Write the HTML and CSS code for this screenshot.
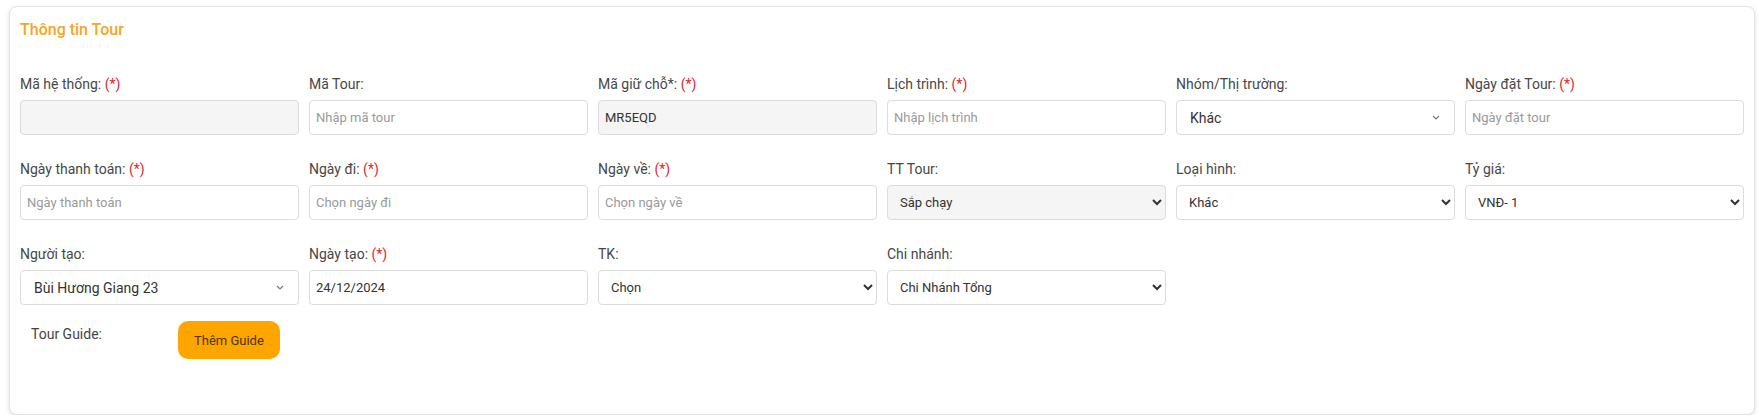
FILE: index.html
```html
<!DOCTYPE html>
<html lang="vi">
<head>
    <meta charset="UTF-8">
    <meta name="viewport" content="width=device-width, initial-scale=1.0">
    <title>Thông tin Tour</title>
    <link rel="stylesheet" href="styles.css">
</head>
<body>

    <div class="card">
        <h2 class="card-title">Thông tin Tour</h2>

        <div class="form-grid">
            <div class="field">
                <label>Mã hệ thống: <span class="req">(*)</span></label>
                <input type="text" class="input" disabled>
            </div>
            <div class="field">
                <label>Mã Tour:</label>
                <input type="text" class="input" placeholder="Nhập mã tour">
            </div>
            <div class="field">
                <label>Mã giữ chỗ*: <span class="req">(*)</span></label>
                <input type="text" class="input" value="MR5EQD" disabled>
            </div>
            <div class="field">
                <label>Lịch trình: <span class="req">(*)</span></label>
                <input type="text" class="input" placeholder="Nhập lịch trình">
            </div>
            <div class="field">
                <label>Nhóm/Thị trường:</label>
                <div class="picker">
                    <span>Khác</span>
                    <svg width="8" height="5" viewBox="0 0 8 5"><path d="M1 1l3 3 3-3" fill="none" stroke="#777" stroke-width="1.2"/></svg>
                </div>
            </div>
            <div class="field">
                <label>Ngày đặt Tour: <span class="req">(*)</span></label>
                <input type="text" class="input" placeholder="Ngày đặt tour">
            </div>

            <div class="field">
                <label>Ngày thanh toán: <span class="req">(*)</span></label>
                <input type="text" class="input" placeholder="Ngày thanh toán">
            </div>
            <div class="field">
                <label>Ngày đi: <span class="req">(*)</span></label>
                <input type="text" class="input" placeholder="Chọn ngày đi">
            </div>
            <div class="field">
                <label>Ngày về: <span class="req">(*)</span></label>
                <input type="text" class="input" placeholder="Chọn ngày về">
            </div>
            <div class="field">
                <label>TT Tour:</label>
                <select class="select select-grey">
                    <option>Sắp chạy</option>
                </select>
            </div>
            <div class="field">
                <label>Loại hình:</label>
                <select class="select">
                    <option>Khác</option>
                </select>
            </div>
            <div class="field">
                <label>Tỷ giá:</label>
                <select class="select">
                    <option>VNĐ- 1</option>
                </select>
            </div>

            <div class="field">
                <label>Người tạo:</label>
                <div class="picker">
                    <span>Bùi Hương Giang 23</span>
                    <svg width="8" height="5" viewBox="0 0 8 5"><path d="M1 1l3 3 3-3" fill="none" stroke="#777" stroke-width="1.2"/></svg>
                </div>
            </div>
            <div class="field">
                <label>Ngày tạo: <span class="req">(*)</span></label>
                <input type="text" class="input" value="24/12/2024">
            </div>
            <div class="field">
                <label>TK:</label>
                <select class="select">
                    <option>Chọn</option>
                </select>
            </div>
            <div class="field">
                <label>Chi nhánh:</label>
                <select class="select">
                    <option>Chi Nhánh Tổng</option>
                </select>
            </div>
        </div>

        <div class="guide-row">
            <span class="guide-label">Tour Guide:</span>
            <button type="button" class="btn-guide">Thêm Guide</button>
        </div>
    </div>

</body>
</html>
```

FILE: styles.css
```css
body {
    font-family: Roboto, "Liberation Sans", Arial, sans-serif;
    margin: 0;
    padding: 0;
    background: #fff;
    color: #444;
}

.card {
    margin: 6px 3px 0 9px;
    border: 1px solid #e3e3e3;
    border-radius: 8px;
    padding: 13px 10px 55px 10px;
    box-shadow: 0 2px 5px rgba(0, 0, 0, 0.12);
    background: #fff;
}

.card-title {
    margin: 0 0 37px 0;
    font-size: 16px;
    line-height: 19px;
    font-weight: 500;
    color: #f5a623;
}

.form-grid {
    display: grid;
    grid-template-columns: repeat(6, 1fr);
    column-gap: 10px;
    row-gap: 26px;
}

.field {
    display: flex;
    flex-direction: column;
}

.field label {
    font-size: 14px;
    line-height: 17px;
    margin-bottom: 7px;
    color: #474747;
}

.req {
    color: #e0282e;
}

.input,
.select,
.picker {
    box-sizing: border-box;
    width: 100%;
    height: 35px;
    border: 1px solid #dcdcdc;
    border-radius: 4px;
    background: #fff;
    font-family: inherit;
    font-size: 13px;
    color: #333;
    margin: 0;
}

.input {
    padding: 0 6px;
    outline: none;
}

.input::placeholder {
    color: #9a9a9a;
}

.input:disabled {
    background: #f5f5f5;
    color: #333;
}

.select {
    padding: 0 4px 0 8px;
}

.select-grey {
    background: #f5f5f5;
}

.picker {
    display: flex;
    align-items: center;
    justify-content: space-between;
    padding: 0 14px 0 13px;
    font-size: 14px;
    color: #333;
}

.guide-row {
    display: flex;
    align-items: flex-start;
    margin-top: 16px;
}

.guide-label {
    width: 147px;
    padding: 5px 0 0 11px;
    font-size: 14px;
    line-height: 17px;
    color: #444;
}

.btn-guide {
    height: 38px;
    padding: 0 16px;
    border: none;
    border-radius: 10px;
    background: #ffa500;
    color: #4e3608;
    font-family: inherit;
    font-size: 13px;
    cursor: pointer;
}
```
